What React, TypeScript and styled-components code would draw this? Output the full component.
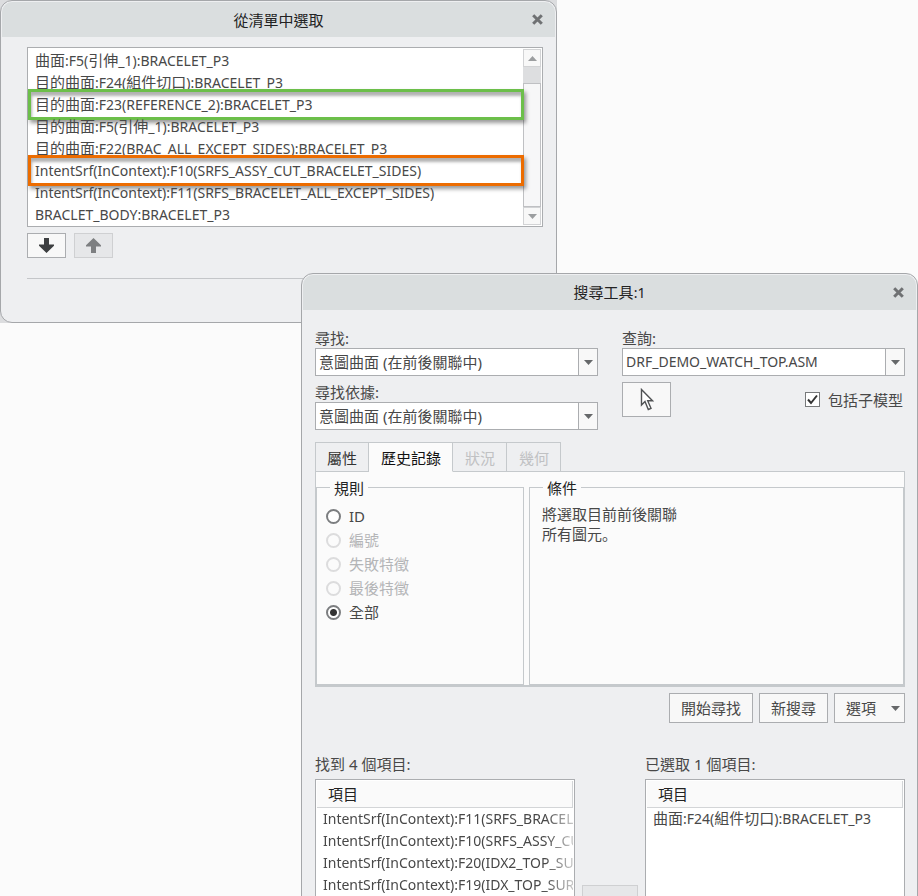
import React, { useState } from 'react';
import styled, { createGlobalStyle, css } from 'styled-components';

const GlobalStyle = createGlobalStyle`
  *, *::before, *::after { box-sizing: border-box; }
  body {
    margin: 0;
    background: #fbfbfb;
    color: #484848;
    font-family: "Noto Sans", "Noto Sans CJK TC", sans-serif;
    font-size: 15px;
    line-height: 20px;
  }
  button, select, input { font: inherit; color: inherit; margin: 0; }
`;

const Desktop = styled.div`
  position: relative;
  height: 100vh;
  overflow: hidden;
`;

const Backdrop = styled.div`
  position: absolute;
  top: 0;
  left: 0;
  right: 361px;
  height: 323px;
  background: #dcdddf;
`;

const Dialog = styled.section`
  display: flex;
  flex-direction: column;
  padding: 1px;
  border: 1px solid #a5a7aa;
  border-radius: 12px;
  background: #eeeff1;
`;

const PickDialog = styled(Dialog)`
  position: absolute;
  top: 0;
  left: 0;
  right: 361px;
  height: 323px;
`;

const SearchDialog = styled(Dialog)`
  position: absolute;
  top: 273px;
  left: 301px;
  right: 0;
  min-height: 700px;
`;

const TitleBar = styled.header`
  display: grid;
  grid-template-columns: 32px 1fr 32px;
  align-items: center;
  height: 35px;
  flex: none;
  border-radius: 10px 10px 0 0;
  background: #dadedf;
`;

const Title = styled.h1`
  grid-column: 2;
  margin: 0;
  font-size: 15px;
  font-weight: 400;
  text-align: center;
  color: #222;
`;

const CloseButton = styled.button`
  display: grid;
  place-items: center;
  width: 28px;
  height: 28px;
  padding: 0;
  border: 0;
  background: none;
`;

const Latin = styled.span`
  font-size: 14px;
`;

const PickBody = styled.div`
  padding: 10px 12px 0 25px;
`;

const ListFrame = styled.div`
  display: flex;
  height: 180px;
  border: 1px solid #abadb0;
  background: #fff;
  padding: 1px 1px 1px 0;
`;

const List = styled.ul`
  flex: 1;
  min-width: 0;
  margin: 0;
  padding: 1px 0 0;
  list-style: none;
`;

const outlines = { green: '#6cbf4a', orange: '#ec6c00' };

const ListItem = styled.li<{ $outline?: 'green' | 'orange' }>`
  position: relative;
  height: 22px;
  padding-left: 7px;
  white-space: nowrap;
  ${p => p.$outline && css`
    &::after {
      content: '';
      position: absolute;
      inset: -5px -1px -4px 0;
      border: 3px solid ${outlines[p.$outline]};
      box-shadow: 2px 3px 4px rgba(0, 0, 0, 0.4), inset 1px 4px 3px rgba(0, 0, 0, 0.3);
      pointer-events: none;
    }
  `}
`;

const ScrollBar = styled.div`
  display: flex;
  flex-direction: column;
  width: 18px;
  background: #dddee0;
`;

const ScrollButton = styled.button`
  display: grid;
  place-items: center;
  height: 18px;
  padding: 0;
  border: 1px solid #d2d3d5;
  background: #f8f8f8;
`;

const ScrollThumb = styled.div`
  flex: 1;
  margin-top: 16px;
  border: 1px solid #bfc0c3;
  background: #f7f7f8;
`;

const ArrowRow = styled.div`
  display: flex;
  gap: 8px;
  padding: 6px 0 20px;
`;

const ArrowButton = styled.button`
  display: grid;
  place-items: center;
  width: 39px;
  height: 25px;
  padding: 0;
  border: 1px solid #abadb0;
  background: #f8f8f8;
  color: #3d3f41;
  &:disabled {
    border-color: #cfd0d2;
    background: #e6e7e9;
    color: #7d7f81;
  }
`;

const Divider = styled.hr`
  margin: 0;
  border: 0;
  border-top: 1px solid #c4c6c9;
`;

const SearchBody = styled.div`
  padding: 18px 11px 0 12px;
`;

const FieldColumns = styled.div`
  display: grid;
  grid-template-columns: 1fr 1fr;
  column-gap: 24px;
`;

const Field = styled.div`
  display: grid;
  grid-template-rows: 20px 28px;
  margin-bottom: 6px;
`;

const FieldLabel = styled.label`
  white-space: nowrap;
`;

const SelectFrame = styled.div`
  display: grid;
  border: 1px solid #abadb0;
  background: #fff;
`;

const Select = styled.select<{ $latin?: boolean }>`
  grid-area: 1 / 1;
  min-width: 0;
  padding: 0 20px 0 3px;
  border: 0;
  background: none;
  appearance: none;
  font-size: ${p => (p.$latin ? '14px' : '15px')};
`;

const SelectArrow = styled.span`
  grid-area: 1 / 1;
  justify-self: end;
  display: grid;
  place-items: center;
  width: 19px;
  border-left: 1px solid #abadb0;
  background: #f8f8f8;
  pointer-events: none;
`;

const PickRow = styled.div`
  display: flex;
  align-items: center;
  justify-content: space-between;
`;

const PointerButton = styled.button`
  display: grid;
  place-items: center;
  width: 49px;
  height: 35px;
  padding: 0;
  border: 1px solid #abadb0;
  background: #f8f8f8;
`;

const CheckLabel = styled.label`
  display: flex;
  align-items: center;
  gap: 8px;
  padding-right: 2px;
`;

const CheckFrame = styled.span`
  display: grid;
  place-items: center;
`;

const CheckInput = styled.input`
  grid-area: 1 / 1;
  width: 15px;
  height: 15px;
  appearance: none;
  border: 1px solid #77797b;
  background: #fff;
`;

const CheckMark = styled.svg`
  grid-area: 1 / 1;
  pointer-events: none;
`;

const Tabs = styled.div`
  display: flex;
  margin-top: 6px;
`;

const Tab = styled.button<{ $active?: boolean }>`
  height: 30px;
  padding: 2px 11px 0 12px;
  margin-bottom: -1px;
  border: 1px solid #c5c9cc;
  border-left-width: 0;
  background: #eeeff1;
  color: #333;
  &:first-child {
    padding-left: 11px;
    border-left-width: 1px;
  }
  &:disabled { color: #c0c1c3; }
  ${p => p.$active && css`
    border-bottom-color: #fbfbfb;
    background: #fbfbfb;
    color: #111;
  `}
`;

const TabPanel = styled.div`
  display: grid;
  grid-template-columns: 208px 1fr;
  gap: 5px;
  height: 216px;
  padding-top: 5px;
  border: 1px solid #c5c9cc;
  border-bottom-width: 2px;
  background: #fbfbfb;
`;

const Group = styled.fieldset`
  min-width: 0;
  margin: 0;
  padding: 7px 9px 0;
  border: 1px solid #c5c9cc;
`;

const Legend = styled.legend`
  margin-left: 4px;
  padding: 2px 4px 0;
  line-height: 18px;
  color: #222;
`;

const ConditionText = styled.p`
  margin: 0 3px;
  font-family: "Noto Sans", "Noto Sans CJK JP", sans-serif;
  white-space: pre-line;
`;

const RadioLabel = styled.label<{ $dim?: boolean }>`
  display: flex;
  align-items: center;
  gap: 8px;
  height: 24px;
  color: ${p => (p.$dim ? '#b4b5b7' : '#484848')};
`;

const Radio = styled.input`
  width: 15px;
  height: 15px;
  appearance: none;
  border: 2px solid #7c7e80;
  border-radius: 50%;
  background: #fff;
  &:checked {
    background: radial-gradient(circle, #333 0 3px, #fff 4px);
  }
  &:disabled { border-color: #dcdcdd; background: #fbfbfb; }
`;

const Actions = styled.div`
  display: flex;
  justify-content: flex-end;
  gap: 6px;
  padding: 6px 0 31px;
`;

const ActionButton = styled.button`
  display: flex;
  align-items: center;
  gap: 15px;
  height: 30px;
  padding: 0 11px;
  border: 1px solid #abadb0;
  background: #f8f8f8;
`;

const MenuButton = styled(ActionButton)`
  padding-right: 4px;
`;

const Results = styled.div`
  display: grid;
  grid-template-columns: 1fr 56px 1fr;
  column-gap: 7px;
`;

const ResultColumn = styled.div`
  min-width: 0;
`;

const ResultTitle = styled.div`
  height: 25px;
`;

const TableFrame = styled.div`
  height: 200px;
  border: 1px solid #abadb0;
  padding: 1px;
  background: #fff;
`;

const Table = styled.table`
  width: 100%;
  table-layout: fixed;
  border-collapse: collapse;
`;

const HeadCell = styled.th`
  height: 26px;
  padding: 0 11px;
  border: 1px solid #d3d5d7;
  border-width: 0 1px 1px 0;
  background: #fafafa;
  font-weight: 400;
  text-align: left;
  color: #222;
`;

const Cell = styled.td<{ $fade?: boolean }>`
  height: 22px;
  padding: 0 0 0 6px;
  overflow: hidden;
  white-space: nowrap;
  ${p => p.$fade && css`
    mask-image: linear-gradient(to right, #000 calc(100% - 28px), rgba(0, 0, 0, 0.3));
  `}
`;

const TransferButton = styled.button`
  align-self: start;
  height: 30px;
  margin-top: 131px;
  border: 1px solid #cfd0d2;
  background: #e6e7e9;
`;

const Triangle = ({ up, color = '#66686a' }: { up?: boolean; color?: string }) => (
  <svg width="9" height="5" viewBox="0 0 9 5" aria-hidden="true">
    <path d={up ? 'M0 5 4.500 0 9 5Z' : 'M0 0H9L4.500 5Z'} fill={color} />
  </svg>
);

const Cross = () => (
  <svg width="11" height="11" viewBox="0 0 11 11" aria-hidden="true">
    <path d="M1.200 1.200 9.800 9.800M9.800 1.200 1.200 9.800" stroke="#6f7173" strokeWidth="3" />
  </svg>
);

const BlockArrow = ({ up }: { up?: boolean }) => (
  <svg width="15" height="15" viewBox="0 0 15 15" aria-hidden="true">
    <path
      d={up ? 'M7.500 0 15 7.200V8.500H10V15H5V8.500H0V7.200Z' : 'M5 0H10V6.500H15V7.800L7.500 15 0 7.800V6.500H5Z'}
      fill="currentColor"
    />
  </svg>
);

const Cursor = () => (
  <svg width="14" height="23" viewBox="0 0 14 23" aria-hidden="true">
    <path
      d="M1.500 1.500V17L5 13.500 8.300 21.500 11 20.300 7.700 12.800H12.500Z"
      fill="#fff"
      stroke="#505254"
      strokeWidth="1.400"
    />
  </svg>
);

type PickItem = { text: string; outline?: 'green' | 'orange' };

const pickItems: PickItem[] = [
  { text: '曲面:F5(引伸_1):BRACELET_P3' },
  { text: '目的曲面:F24(組件切口):BRACELET_P3' },
  { text: '目的曲面:F23(REFERENCE_2):BRACELET_P3', outline: 'green' },
  { text: '目的曲面:F5(引伸_1):BRACELET_P3' },
  { text: '目的曲面:F22(BRAC_ALL_EXCEPT_SIDES):BRACELET_P3' },
  { text: 'IntentSrf(InContext):F10(SRFS_ASSY_CUT_BRACELET_SIDES)', outline: 'orange' },
  { text: 'IntentSrf(InContext):F11(SRFS_BRACELET_ALL_EXCEPT_SIDES)' },
  { text: 'BRACLET_BODY:BRACELET_P3' },
];

const rules = [
  { id: 'id', label: 'ID' },
  { id: 'number', label: '編號', disabled: true },
  { id: 'failed', label: '失敗特徵', disabled: true },
  { id: 'last', label: '最後特徵', disabled: true },
  { id: 'all', label: '全部' },
];

const found = [
  'IntentSrf(InContext):F11(SRFS_BRACEL',
  'IntentSrf(InContext):F10(SRFS_ASSY_CU',
  'IntentSrf(InContext):F20(IDX2_TOP_SUR',
  'IntentSrf(InContext):F19(IDX_TOP_SUR',
];

const selected = ['曲面:F24(組件切口):BRACELET_P3'];

/** Sets Latin runs one step smaller than the Chinese text around them. */
function Mixed({ text }: { text: string }) {
  return (
    <>
      {text.split(/([\x21-\x7e]+)/).map((run, i) => (i % 2 ? <Latin key={i}>{run}</Latin> : run))}
    </>
  );
}

type SelectFieldProps = { id: string; label: string; value: string; latin?: boolean };

function SelectField({ id, label, value, latin }: SelectFieldProps) {
  return (
    <Field>
      <FieldLabel htmlFor={id}>{label}</FieldLabel>
      <SelectFrame>
        <Select id={id} defaultValue={value} $latin={latin}>
          <option>{value}</option>
        </Select>
        <SelectArrow><Triangle /></SelectArrow>
      </SelectFrame>
    </Field>
  );
}

function ResultTable({ title, rows, fade }: { title: string; rows: string[]; fade?: boolean }) {
  return (
    <ResultColumn>
      <ResultTitle>{title}</ResultTitle>
      <TableFrame>
        <Table aria-label={title}>
          <thead><tr><HeadCell scope="col">項目</HeadCell></tr></thead>
          <tbody>
            {rows.map(r => <tr key={r}><Cell $fade={fade}><Mixed text={r} /></Cell></tr>)}
          </tbody>
        </Table>
      </TableFrame>
    </ResultColumn>
  );
}

export default function App() {
  const [rule, setRule] = useState('all');
  const [submodels, setSubmodels] = useState(true);
  return (
    <>
      <GlobalStyle />
      <Desktop>
        <Backdrop />
        <PickDialog aria-label="從清單中選取">
          <TitleBar>
            <Title>從清單中選取</Title>
            <CloseButton aria-label="關閉"><Cross /></CloseButton>
          </TitleBar>
          <PickBody>
            <ListFrame>
              <List>
                {pickItems.map(i => (
                  <ListItem key={i.text} $outline={i.outline}><Mixed text={i.text} /></ListItem>
                ))}
              </List>
              <ScrollBar>
                <ScrollButton aria-label="向上捲動"><Triangle up color="#9c9ea0" /></ScrollButton>
                <ScrollThumb />
                <ScrollButton aria-label="向下捲動"><Triangle color="#9c9ea0" /></ScrollButton>
              </ScrollBar>
            </ListFrame>
            <ArrowRow>
              <ArrowButton aria-label="下一個"><BlockArrow /></ArrowButton>
              <ArrowButton aria-label="上一個" disabled><BlockArrow up /></ArrowButton>
            </ArrowRow>
            <Divider />
          </PickBody>
        </PickDialog>

        <SearchDialog aria-label="搜尋工具:1">
          <TitleBar>
            <Title><Mixed text="搜尋工具:1" /></Title>
            <CloseButton aria-label="關閉"><Cross /></CloseButton>
          </TitleBar>
          <SearchBody>
            <FieldColumns>
              <div>
                <SelectField id="find" label="尋找:" value="意圖曲面 (在前後關聯中)" />
                <SelectField id="find-by" label="尋找依據:" value="意圖曲面 (在前後關聯中)" />
              </div>
              <div>
                <SelectField id="query" label="查詢:" value="DRF_DEMO_WATCH_TOP.ASM" latin />
                <PickRow>
                  <PointerButton aria-label="選取"><Cursor /></PointerButton>
                  <CheckLabel>
                    <CheckFrame>
                      <CheckInput
                        type="checkbox"
                        checked={submodels}
                        onChange={e => setSubmodels(e.target.checked)}
                      />
                      {submodels && (
                        <CheckMark width="11" height="11" viewBox="0 0 11 11" aria-hidden="true">
                          <path d="M1 5.500 4 9 10 1.500" fill="none" stroke="#333" strokeWidth="2" />
                        </CheckMark>
                      )}
                    </CheckFrame>
                    包括子模型
                  </CheckLabel>
                </PickRow>
              </div>
            </FieldColumns>

            <Tabs role="tablist">
              <Tab role="tab">屬性</Tab>
              <Tab role="tab" aria-selected $active>歷史記錄</Tab>
              <Tab role="tab" disabled>狀況</Tab>
              <Tab role="tab" disabled>幾何</Tab>
            </Tabs>
            <TabPanel role="tabpanel">
              <Group>
                <Legend>規則</Legend>
                {rules.map(r => (
                  <RadioLabel key={r.id} $dim={r.disabled}>
                    <Radio
                      type="radio"
                      name="rule"
                      disabled={r.disabled}
                      checked={rule === r.id}
                      onChange={() => setRule(r.id)}
                    />
                    {r.label}
                  </RadioLabel>
                ))}
              </Group>
              <Group>
                <Legend>條件</Legend>
                <ConditionText>{'將選取目前前後關聯\n所有圖元。'}</ConditionText>
              </Group>
            </TabPanel>

            <Actions>
              <ActionButton>開始尋找</ActionButton>
              <ActionButton>新搜尋</ActionButton>
              <MenuButton>選項<Triangle /></MenuButton>
            </Actions>

            <Results>
              <ResultTable title="找到 4 個項目:" rows={found} fade />
              <TransferButton aria-label="加入" disabled />
              <ResultTable title="已選取 1 個項目:" rows={selected} />
            </Results>
          </SearchBody>
        </SearchDialog>
      </Desktop>
    </>
  );
}
